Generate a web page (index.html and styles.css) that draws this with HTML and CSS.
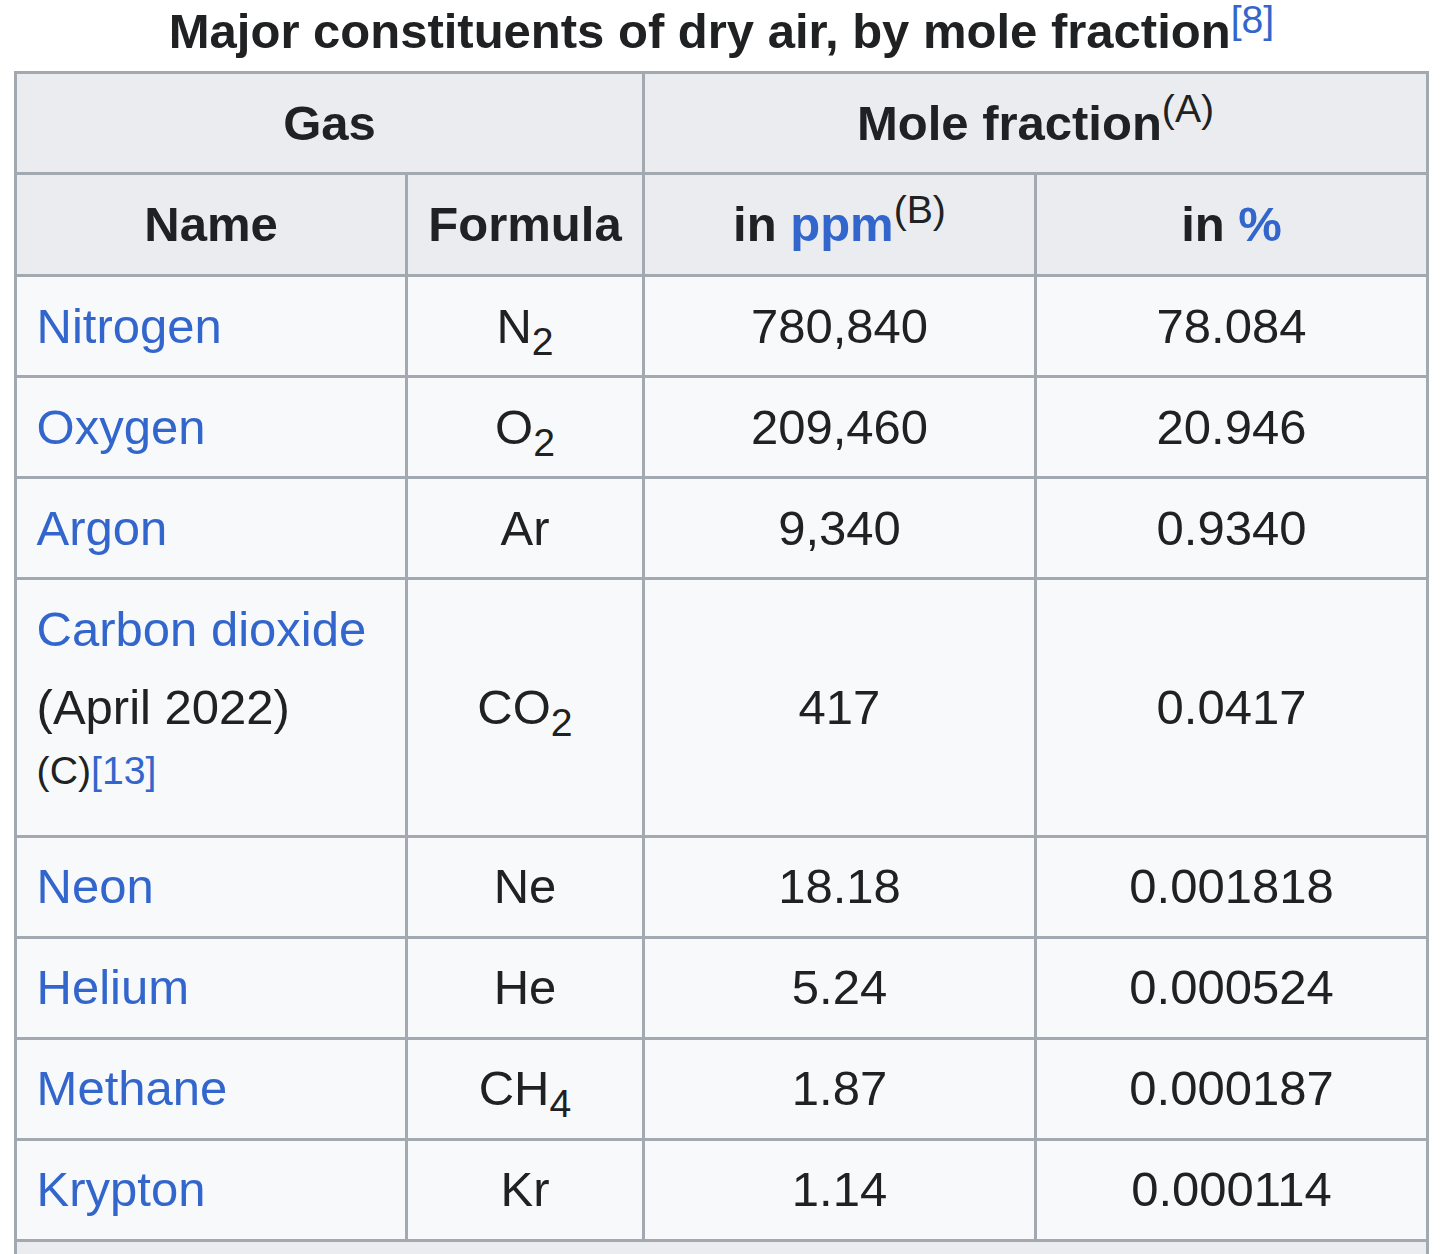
FILE: index.html
```html
<!DOCTYPE html>
<html lang="en">
<head>
<meta charset="utf-8">
<title>Major constituents of dry air, by mole fraction</title>
<link rel="stylesheet" href="styles.css">
</head>
<body>
<table class="wikitable">
  <caption>Major constituents of dry air, by mole fraction<sup class="ref"><a href="#cite-8">[8]</a></sup></caption>
  <colgroup>
    <col class="col-name">
    <col class="col-formula">
    <col class="col-ppm">
    <col class="col-pct">
  </colgroup>
  <thead>
    <tr>
      <th colspan="2">Gas</th>
      <th colspan="2">Mole fraction<sup>(A)</sup></th>
    </tr>
    <tr>
      <th>Name</th>
      <th>Formula</th>
      <th>in <a href="#ppm">ppm</a><sup>(B)</sup></th>
      <th>in <a href="#percent">%</a></th>
    </tr>
  </thead>
  <tbody>
    <tr>
      <td class="name"><a href="#nitrogen">Nitrogen</a></td>
      <td>N<sub>2</sub></td>
      <td>780,840</td>
      <td>78.084</td>
    </tr>
    <tr>
      <td class="name"><a href="#oxygen">Oxygen</a></td>
      <td>O<sub>2</sub></td>
      <td>209,460</td>
      <td>20.946</td>
    </tr>
    <tr>
      <td class="name"><a href="#argon">Argon</a></td>
      <td>Ar</td>
      <td>9,340</td>
      <td>0.9340</td>
    </tr>
    <tr>
      <td class="name"><a href="#carbon-dioxide">Carbon dioxide</a><br>(April 2022)<span class="notes"><sup>(C)</sup><sup class="ref"><a href="#cite-13">[13]</a></sup></span></td>
      <td>CO<sub>2</sub></td>
      <td>417</td>
      <td>0.0417</td>
    </tr>
    <tr>
      <td class="name"><a href="#neon">Neon</a></td>
      <td>Ne</td>
      <td>18.18</td>
      <td>0.001818</td>
    </tr>
    <tr>
      <td class="name"><a href="#helium">Helium</a></td>
      <td>He</td>
      <td>5.24</td>
      <td>0.000524</td>
    </tr>
    <tr>
      <td class="name"><a href="#methane">Methane</a></td>
      <td>CH<sub>4</sub></td>
      <td>1.87</td>
      <td>0.000187</td>
    </tr>
    <tr>
      <td class="name"><a href="#krypton">Krypton</a></td>
      <td>Kr</td>
      <td>1.14</td>
      <td>0.000114</td>
    </tr>
    <tr class="footer-row">
      <th colspan="4"></th>
    </tr>
  </tbody>
</table>
</body>
</html>
```

FILE: styles.css
```css
html,
body {
  margin: 0;
  padding: 0;
  background: #ffffff;
  overflow: hidden;
}

body {
  font-family: "Liberation Sans", Arial, Helvetica, sans-serif;
  font-size: 49px;
  line-height: 1.6;
  color: #202122;
}

a {
  color: #3366cc;
  text-decoration: none;
}

.wikitable {
  margin-left: 14px;
  width: 1415px;
  table-layout: fixed;
  border-collapse: separate;
  border-spacing: 0;
  background: #f8f9fa;
  border-top: 3px solid #a2a9b1;
  border-left: 3px solid #a2a9b1;
  color: #202122;
}

.wikitable caption {
  font-weight: bold;
  text-align: center;
  line-height: 62px;
  padding-bottom: 9px;
  white-space: nowrap;
}

.col-name { width: 391px; }
.col-formula { width: 237px; }
.col-ppm { width: 392px; }
.col-pct { width: 392px; }

.wikitable th,
.wikitable td {
  padding: 9.8px 19.6px;
  border-right: 3px solid #a2a9b1;
  border-bottom: 3px solid #a2a9b1;
  text-align: center;
  vertical-align: middle;
}

.wikitable th {
  background: #eaecf0;
  font-weight: bold;
}

.wikitable tr:nth-child(2) th {
  padding-bottom: 10.8px;
}

.wikitable td.name {
  text-align: left;
}

.footer-row th {
  height: 40px;
}

.notes {
  white-space: nowrap;
}

sup {
  font-size: 80%;
  font-weight: normal;
  line-height: 1;
  vertical-align: baseline;
  position: relative;
  top: -0.46em;
}

.wikitable caption sup {
  top: -0.38em;
}

sub {
  font-size: 80%;
  line-height: 1;
  vertical-align: baseline;
  position: relative;
  top: 0.3em;
}
```
